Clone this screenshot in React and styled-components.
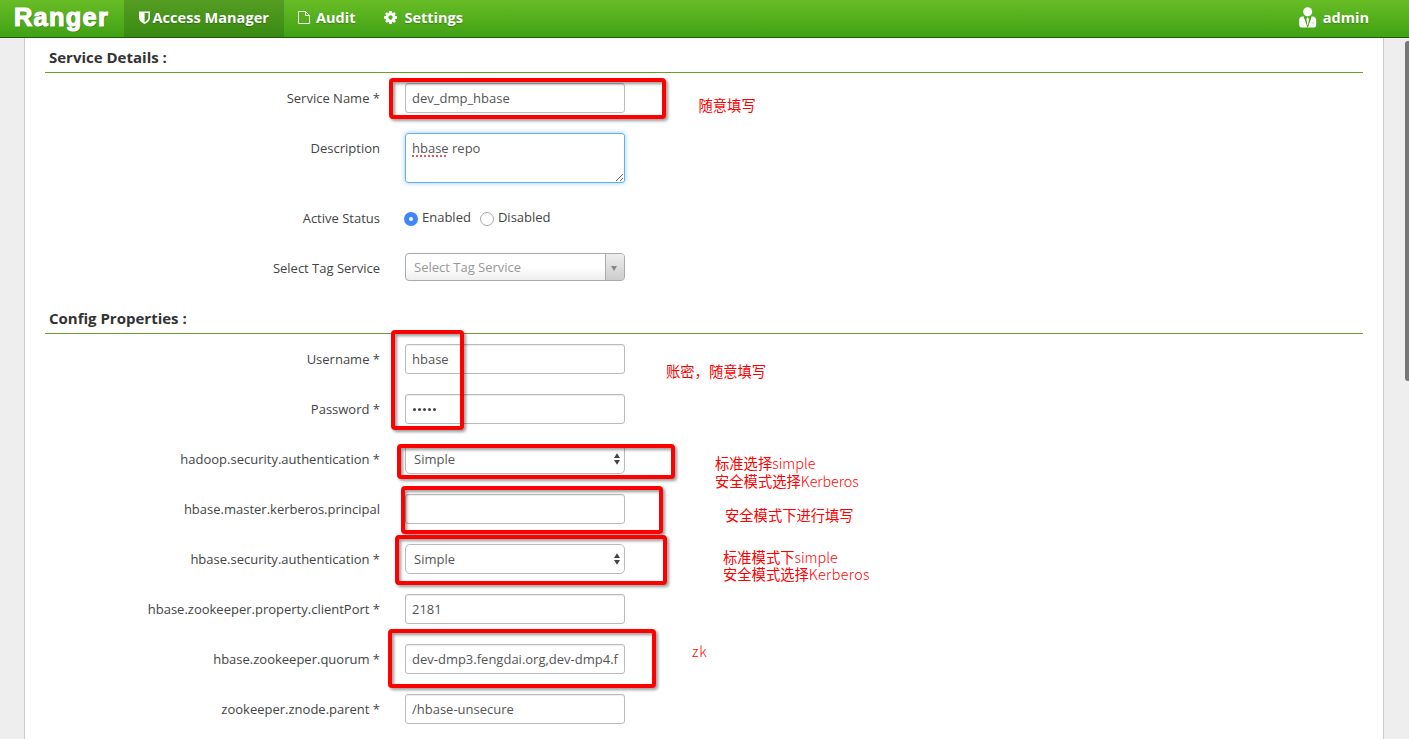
import React from "react";
import styled, { createGlobalStyle } from "styled-components";

const Global = createGlobalStyle`
  * { box-sizing: border-box; }
  body {
    margin: 0;
    background: #eee;
    color: #444;
    font-family: "Open Sans", "Noto Sans CJK SC", sans-serif;
    font-size: 13px;
    overflow: hidden;
  }
`;

const Page = styled.div`
  position: relative;
  width: 1409px;
  height: 739px;
  overflow: hidden;
`;

const Header = styled.header`
  display: flex;
  height: 38px;
  background: linear-gradient(#68bd26, #40a114);
  border-bottom: 1px solid #1f5a06;
  color: #fff;
  font-size: 14.5px;
  font-weight: 700;
  text-shadow: 0 1px 1px rgba(0, 0, 0, 0.25);
`;

const Logo = styled.div`
  width: 124px;
  padding-left: 14px;
  font: bold 25.5px/34px "Liberation Sans", sans-serif;
  letter-spacing: 1.2px;
  -webkit-text-stroke: 1.1px #fff;
  text-shadow: 1px 1px 1px rgba(0, 0, 0, 0.35);
`;

const NavItem = styled.a`
  display: flex;
  align-items: center;
  height: 37px;
  padding: 0 15px 3px 14px;
  gap: ${(p) => p.$gap || 6}px;
  background: ${(p) => (p.$active ? "linear-gradient(#559d23, #388a12)" : "none")};
`;

const AccessItem = styled(NavItem)`
  width: 160px;
  padding-left: 15px;
  padding-right: 0;
  letter-spacing: 0.05px;
  white-space: nowrap;
`;

const Account = styled(NavItem)`
  margin-left: auto;
  padding-right: 40px;
`;

const Panel = styled.main`
  height: 701px;
  margin: 0 25px 0 24px;
  padding: 0 20px;
  background: #fff;
  border: solid #ccc;
  border-width: 0 1px;
`;

const Legend = styled.h2`
  height: ${(p) => p.$height}px;
  margin: 0 0 10px;
  padding: 0 4px 4px;
  display: flex;
  align-items: flex-end;
  border-bottom: 1px solid ${(p) => p.$line || "#62a21f"};
  color: #333;
  font-size: 15px;
  line-height: 21px;
  font-weight: 700;
`;

const Row = styled.div`
  display: flex;
  min-height: 30px;
  margin-bottom: 20px;
`;

const Label = styled.label`
  width: 335px;
  margin-right: 25px;
  line-height: 30px;
  text-align: right;
`;

const Field = styled.div`
  width: 220px;
  height: ${(p) => p.$height || 30}px;
  padding: 0 6px;
  border: 1px solid #bbb;
  border-radius: 3px;
  box-shadow: inset 0 1px 1px rgba(0, 0, 0, 0.075);
  color: #555;
  line-height: 28px;
  white-space: nowrap;
  overflow: hidden;
`;

const TextArea = styled(Field)`
  display: flex;
  justify-content: space-between;
  align-items: flex-end;
  padding-right: 0;
  border-color: #66afe9;
  box-shadow: 0 0 5px rgba(82, 168, 236, 0.6);
`;

const Value = styled.span`
  align-self: flex-start;
`;

const Misspelt = styled.span`
  text-decoration: underline dotted #f0554a 2px;
  text-underline-offset: 2px;
  text-decoration-skip-ink: none;
`;

const Secret = styled.span`
  display: flex;
  align-items: center;
  height: 28px;
  gap: 1.9px;
  padding-left: 1px;
`;

const Bullet = styled.i`
  width: 3px;
  height: 3px;
  border-radius: 50%;
  background: #444;
`;

const SelectBox = styled(Field)`
  display: flex;
  justify-content: space-between;
  align-items: center;
  padding: 0 4px 0 8px;
  border-radius: 5px;
  box-shadow: none;
`;

const Chosen = styled(Field)`
  display: flex;
  justify-content: space-between;
  padding: 0 0 0 8px;
  border-color: #aaa;
  border-radius: 4px;
  background: linear-gradient(#fff 50%, #eee);
  box-shadow: none;
  color: #999;
  line-height: 27px;
`;

const ChosenArrow = styled.span`
  display: flex;
  align-items: center;
  justify-content: center;
  width: 19px;
  padding: 2px 2px 0 0;
  border-left: 1px solid #aaa;
  background: linear-gradient(#eee, #ccc);
`;

const RadioGroup = styled.div`
  display: flex;
  align-items: center;
  height: 30px;
  margin-left: -1px;
`;

const RadioText = styled.span`
  margin: -2px 9px 0 4px;
`;

const Radio = styled.span`
  width: 14px;
  height: 14px;
  margin-top: 1px;
  border-radius: 50%;
  border: ${(p) => (p.$on ? "5px solid #3b87fb" : "1px solid #aaa")};
  background: #fff;
`;

const Scrollbar = styled.div`
  position: absolute;
  left: 1405px;
  top: 41px;
  width: 8px;
  height: 340px;
  border-radius: 3px;
  background: #777;
`;

const Frame = styled.div`
  position: absolute;
  left: ${(p) => p.$x}px;
  top: ${(p) => p.$y}px;
  width: ${(p) => p.$w}px;
  height: ${(p) => p.$h}px;
  border: 4px solid #f00;
  border-radius: 4px;
  filter: drop-shadow(2px 2px 1.5px rgba(0, 0, 0, 0.4));
`;

const Note = styled.div`
  position: absolute;
  left: ${(p) => p.$x}px;
  top: ${(p) => p.$y}px;
  color: #f00;
  font: 14.3px/${(p) => p.$line || 18}px "Noto Sans CJK SC", sans-serif;
  white-space: pre;
`;

const Latin = styled.span`
  font-weight: 300;
  letter-spacing: ${(p) => p.$spacing || 0}px;
`;

const ShieldIcon = () => (
  <svg width="11" height="13" viewBox="0 0 11 13">
    <path d="M0 .6H11V6.5C11 9.6 8.5 11.6 5.5 13 2.5 11.6 0 9.6 0 6.5ZM5.6 2.1V11.2C8 9.9 9.4 8.4 9.4 6.5V2.1Z" fill="#fff" fillRule="evenodd" />
  </svg>
);

const FileIcon = () => (
  <svg width="12" height="14" viewBox="0 0 12 14" fill="none" stroke="#fff" strokeOpacity=".9">
    <path d="M.5 1.500H7.500L11.500 5.500V13.500H.5ZM7.500 1.500V5.500H11.500" />
  </svg>
);

const GearIcon = () => (
  <svg width="13" height="13" viewBox="0 0 1536 1536" fill="#fff">
    <path fillRule="evenodd" d="M1024 768q0-106-75-181t-181-75-181 75-75 181 75 181 181 75 181-75 75-181zm512-109v222q0 12-8 23t-20 13l-185 28q-19 54-39 91 35 50 107 138 10 12 10 25t-9 23q-27 37-99 108t-94 71q-12 0-26-9l-138-108q-44 23-91 38-16 136-29 186-7 28-36 28H657q-14 0-24.500-8.500T621 1506l-28-184q-49-16-90-37l-141 107q-10 9-25 9-14 0-25-11-126-114-165-168-7-10-7-23 0-12 8-23 15-21 51-66.500t54-70.500q-27-50-41-99L29 913q-13-2-21-12.500T0 877V655q0-12 8-23t19-13l186-28q14-46 39-92-40-57-107-138-10-12-10-24 0-10 9-23 26-36 98.500-107.500T337 135q13 0 26 10l138 107q44-23 91-38 16-136 29-186 7-28 36-28h222q14 0 24.500 8.500T915 30l28 184q49 16 90 37l142-107q9-9 24-9 13 0 25 10 129 119 165 170 7 8 7 22 0 12-8 23-15 21-51 66.500t-54 70.500q26 50 41 98l183 28q13 2 21 12.500t8 23.500z" />
  </svg>
);

const UserIcon = () => (
  <svg width="18" height="21" viewBox="0 0 18 21" fill="#fff">
    <circle cx="8.700" cy="4.700" r="4.500" />
    <path d="M3.500 9.500H5L8.700 19 12.400 9.500H14Q17.200 10 17.200 13.500V18Q17.200 20.500 15 20.500H2.500Q.2 20.500.2 18V13Q.2 9.800 3.500 9.500Z" />
    <path d="M5.300 9.500 8.700 19.500 12.100 9.500" fill="none" stroke="#4b9f1e" strokeWidth="1.100" />
    <path d="M8.700 10.300 10 12 9 18H8.400L7.400 12Z" />
    <path d="M12.500 16H15.500" stroke="#a5d389" strokeWidth=".8" />
  </svg>
);

const Grip = () => (
  <svg width="9" height="9" viewBox="0 0 9 9" stroke="#555" strokeWidth=".9">
    <path d="M1 8 8 1M5 8 8 5" />
  </svg>
);

const UpDown = () => (
  <svg width="6" height="12" viewBox="0 0 6 12" fill="#444">
    <path d="M0 5 3 .2 6 5ZM0 7H6L3 11.800Z" />
  </svg>
);

const Down = () => (
  <svg width="6" height="5" viewBox="0 0 6 5" fill="#888">
    <path d="M0 0H6L3 5Z" />
  </svg>
);

const frames = [
  [389, 78, 277, 41],
  [391, 330, 73, 100],
  [397, 444, 278, 35],
  [401, 486, 262, 48],
  [395, 535, 272, 50],
  [388, 629, 268, 59],
];

const FormRow = ({ label, children }) => (
  <Row>
    <Label>{label}</Label>
    {children}
  </Row>
);

export default function App() {
  return (
    <Page>
      <Global />
      <Header>
        <Logo>Ranger</Logo>
        <AccessItem $active $gap={2.5}><ShieldIcon />Access Manager</AccessItem>
        <NavItem><FileIcon />Audit</NavItem>
        <NavItem $gap={7}><GearIcon />Settings</NavItem>
        <Account><UserIcon />admin</Account>
      </Header>
      <Panel>
        <Legend $height={35}>Service Details :</Legend>
        <FormRow label="Service Name *"><Field>dev_dmp_hbase</Field></FormRow>
        <FormRow label="Description">
          <TextArea $height={50}>
            <Value><Misspelt>hbase</Misspelt> repo</Value>
            <Grip />
          </TextArea>
        </FormRow>
        <FormRow label="Active Status">
          <RadioGroup>
            <Radio $on /><RadioText>Enabled</RadioText>
            <Radio /><RadioText>Disabled</RadioText>
          </RadioGroup>
        </FormRow>
        <FormRow label="Select Tag Service">
          <Chosen $height={28}>Select Tag Service<ChosenArrow><Down /></ChosenArrow></Chosen>
        </FormRow>
        <Legend $height={31} $line="#6b9a38">Config Properties :</Legend>
        <FormRow label="Username *"><Field>hbase</Field></FormRow>
        <FormRow label="Password *">
          <Field><Secret><Bullet /><Bullet /><Bullet /><Bullet /><Bullet /></Secret></Field>
        </FormRow>
        <FormRow label="hadoop.security.authentication *"><SelectBox>Simple<UpDown /></SelectBox></FormRow>
        <FormRow label="hbase.master.kerberos.principal"><Field /></FormRow>
        <FormRow label="hbase.security.authentication *"><SelectBox>Simple<UpDown /></SelectBox></FormRow>
        <FormRow label="hbase.zookeeper.property.clientPort *"><Field>2181</Field></FormRow>
        <FormRow label="hbase.zookeeper.quorum *"><Field>dev-dmp3.fengdai.org,dev-dmp4.f</Field></FormRow>
        <FormRow label="zookeeper.znode.parent *"><Field>/hbase-unsecure</Field></FormRow>
      </Panel>
      {frames.map(([x, y, w, h]) => <Frame key={y} $x={x} $y={y} $w={w} $h={h} />)}
      <Note $x={698.5} $y={96}>随意填写</Note>
      <Note $x={666} $y={362}>账密，随意填写</Note>
      <Note $x={715} $y={454}>{"标准选择"}<Latin>simple</Latin>{"\n安全模式选择"}<Latin>Kerberos</Latin></Note>
      <Note $x={725} $y={506}>安全模式下进行填写</Note>
      <Note $x={723} $y={548} $line={17}>{"标准模式下"}<Latin>simple</Latin>{"\n安全模式选择"}<Latin $spacing={0.4}>Kerberos</Latin></Note>
      <Note $x={692} $y={642}><Latin $spacing={0.7}>zk</Latin></Note>
      <Scrollbar />
    </Page>
  );
}
